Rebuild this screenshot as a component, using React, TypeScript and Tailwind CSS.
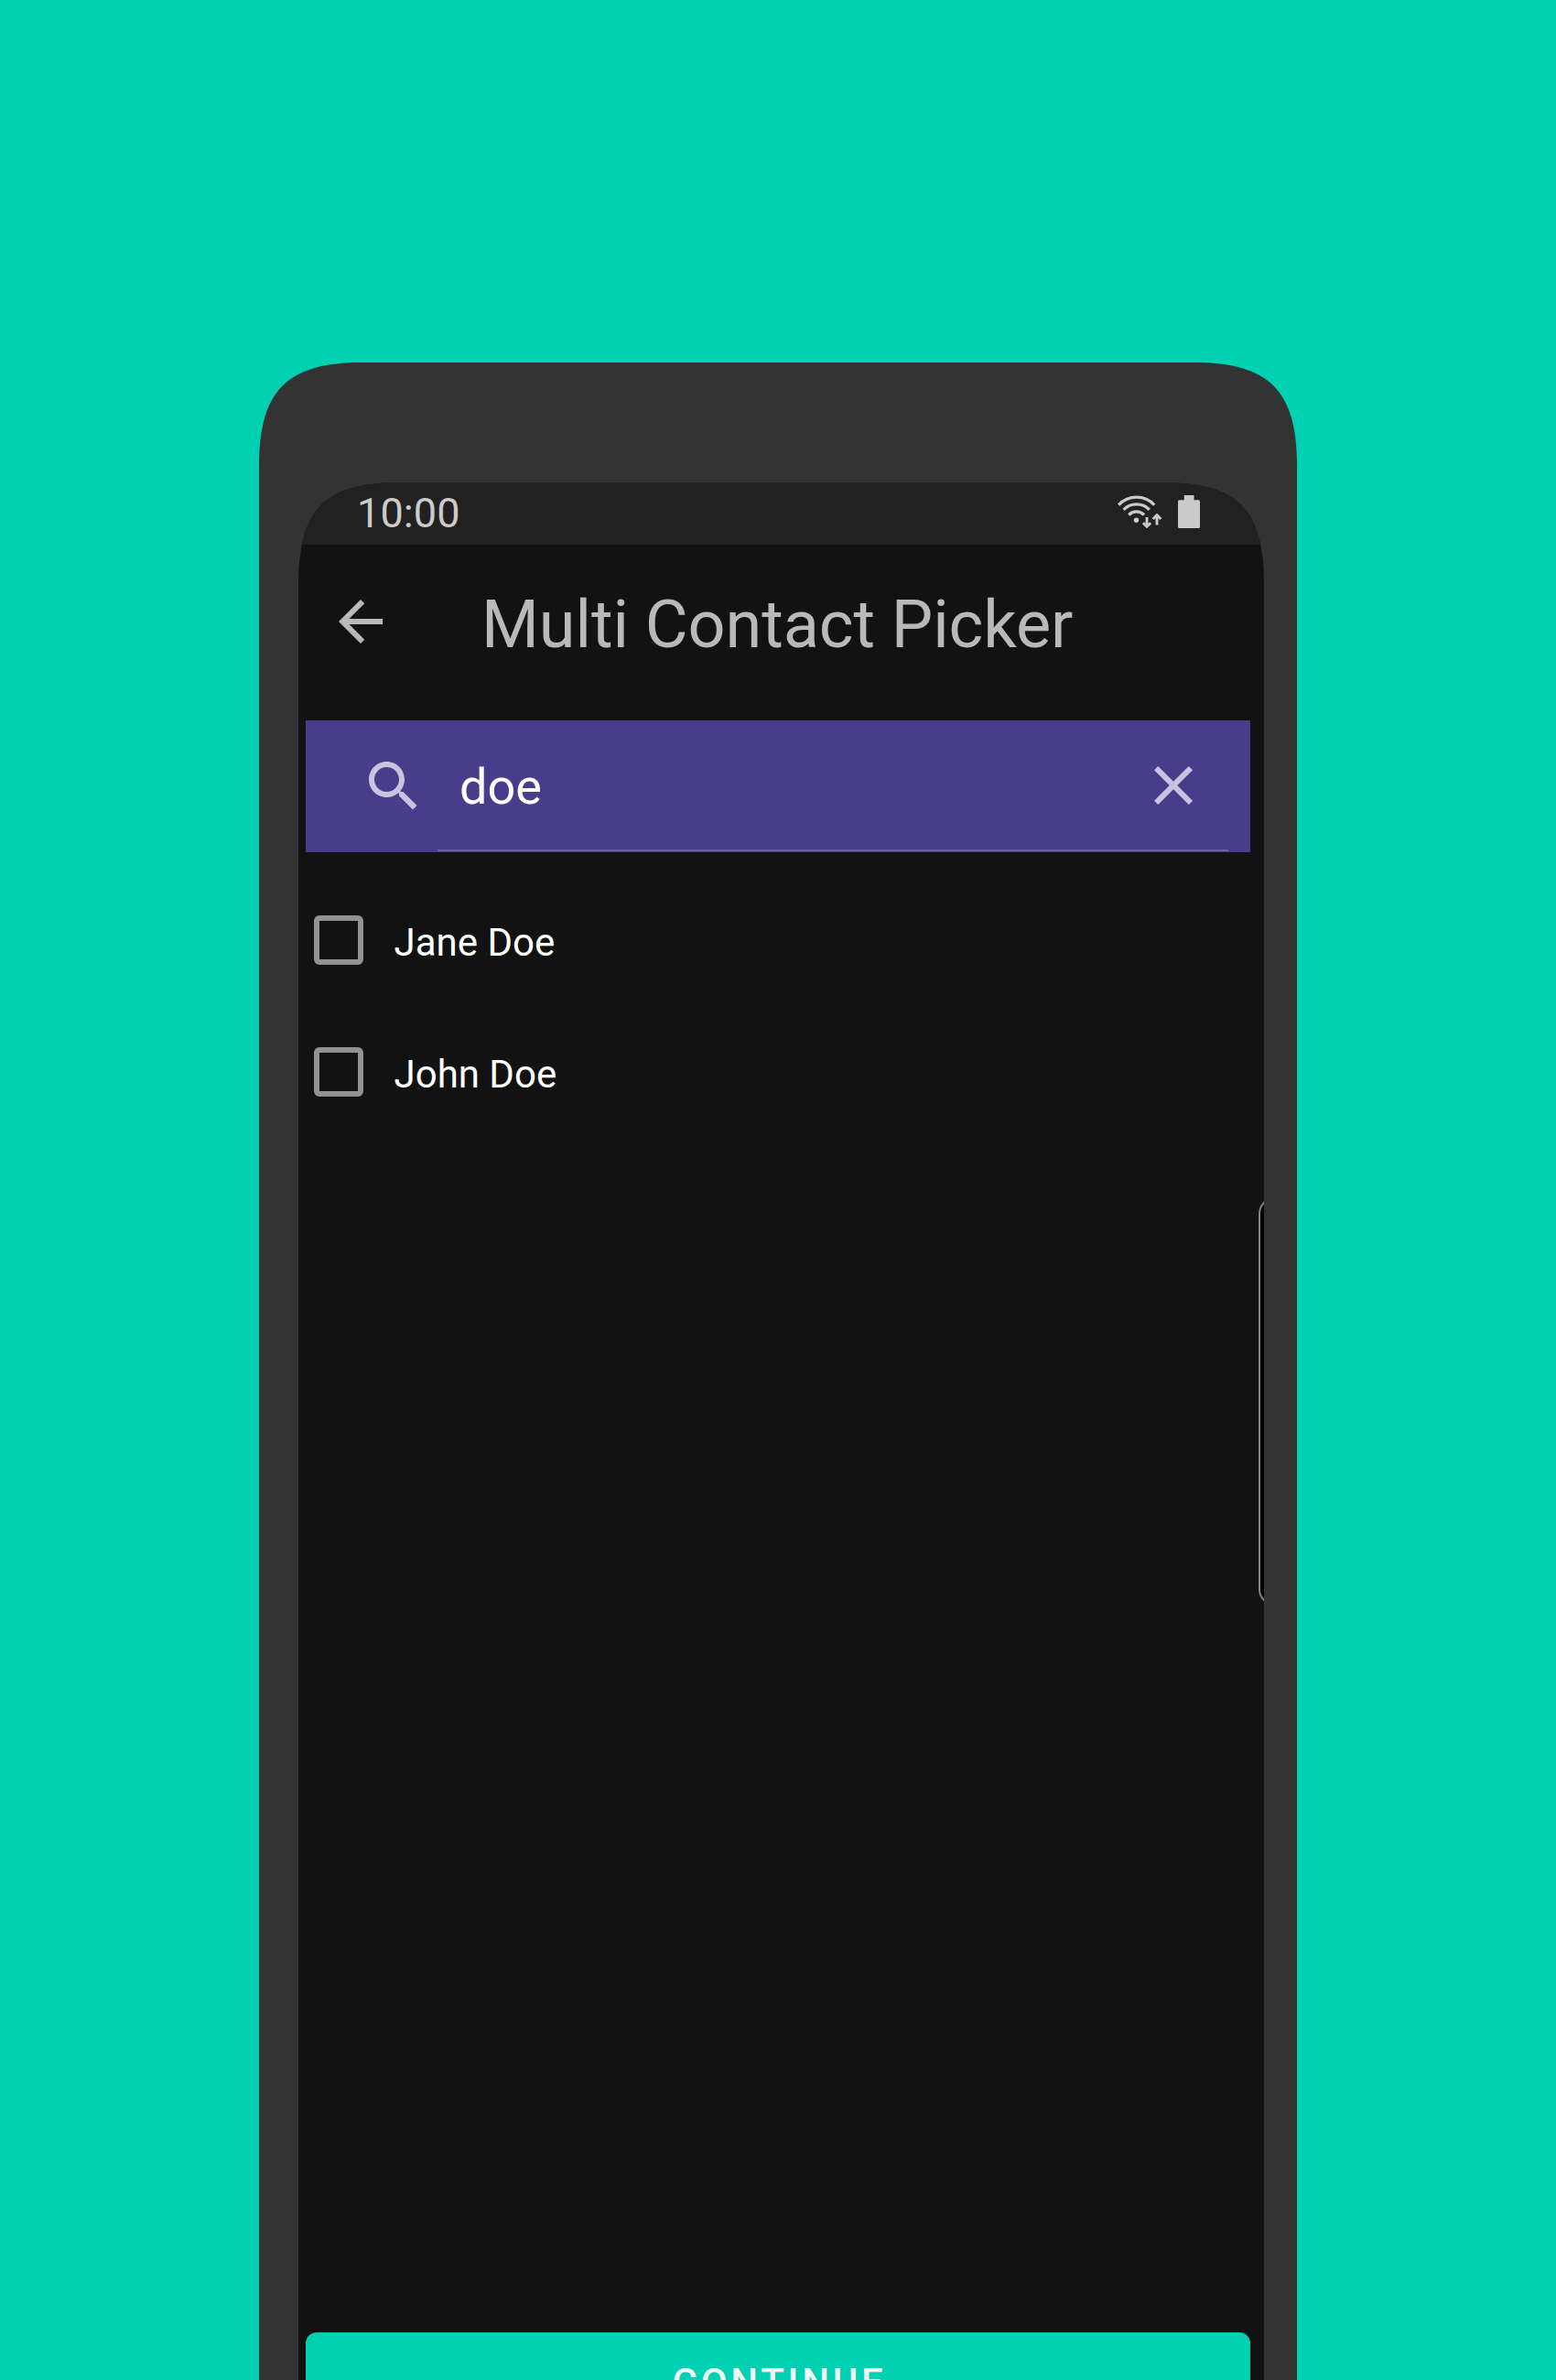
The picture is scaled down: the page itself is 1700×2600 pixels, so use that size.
const contacts = ["Jane Doe", "John Doe"];

function StatusBar() {
  return (
    <div className="flex h-[68px] items-center justify-between bg-[#212121] pl-[64px] pr-[70px] text-[#cbcbcb]">
      <span className="text-[45px] leading-[68px] tracking-[0.100px]">10:00</span>
      <div className="mb-[4px] flex h-[36px] items-start gap-[17px]">
        <svg className="h-[38px] w-[50px]" viewBox="0 0 50 38" fill="none" stroke="currentColor">
          <path d="M2.200 10.600C13 -0.600 30.500 -0.600 41.200 10.600" strokeWidth="3.200" />
          <path d="M7.600 15.800C15.500 8 28 8 35.800 15.800" strokeWidth="3.200" />
          <path d="M13.200 21.500C18 16.700 25 16.700 30 21.500" strokeWidth="3.200" />
          <circle cx="21.500" cy="27.200" r="2.700" fill="currentColor" stroke="none" />
          <path d="M33 24V34M28.800 30.200L33 34.200L37.200 30.200" strokeWidth="2.900" />
          <path d="M44 32.500V22M39.600 26L44 21.800L48.400 26" strokeWidth="2.900" />
        </svg>
        <svg className="h-[37px] w-[24px]" viewBox="0 0 24 37" fill="currentColor">
          <path d="M6.700 0H17.500V5.300H22.500A1.500 1.500 0 0 1 24 6.800V34.500A1.500 1.500 0 0 1 22.500 36H1.500A1.500 1.500 0 0 1 0 34.500V6.800A1.500 1.500 0 0 1 1.500 5.300H6.700Z" />
        </svg>
      </div>
    </div>
  );
}

function Header() {
  return (
    <header className="flex h-[192px] items-start pl-[32px] pt-[48px] text-[#b9b9b9]">
      <svg className="h-[72px] w-[72px]" viewBox="0 0 24 24" fill="currentColor">
        <path d="M20 11H7.830l5.590-5.590L12 4l-8 8 8 8 1.410-1.410L7.830 13H20v-2z" />
      </svg>
      <h1 className="ml-[96px] pt-[4px] text-[72px] leading-[72px] tracking-[-0.050px] whitespace-nowrap">
        Multi Contact Picker
      </h1>
    </header>
  );
}

function SearchBar() {
  return (
    <div className="ml-[8px] flex h-[144px] w-[1032px] bg-[#483d8b]">
      <div className="flex w-[144px] items-center pl-[60px] text-[#c9c4de]">
        <svg className="h-[72px] w-[72px]" viewBox="0 0 24 24" fill="currentColor">
          <path d="M15.500 14h-.79l-.28-.27C15.410 12.590 16 11.110 16 9.500 16 5.910 13.090 3 9.500 3S3 5.910 3 9.500 5.910 16 9.500 16c1.610 0 3.090-.59 4.230-1.570l.27.28v.79l5 4.990L20.490 19l-4.990-5zm-6 0C7.010 14 5 11.990 5 9.500S7.010 5 9.500 5 14 7.010 14 9.500 11.990 14 9.500 14z" />
        </svg>
      </div>
      <div className="mb-px flex w-[864px] items-center justify-between border-b-2 border-[#695ea0] pl-[24px] pr-[24px]">
        <span className="pt-[4px] text-[54px] leading-[138px] text-white">doe</span>
        <svg className="h-[72px] w-[72px] text-[#c9c4de]" viewBox="0 0 24 24" fill="currentColor">
          <path d="M19 6.410L17.590 5 12 10.590 6.410 5 5 6.410 10.590 12 5 17.590 6.410 19 12 13.410 17.590 19 19 17.590 13.410 12z" />
        </svg>
      </div>
    </div>
  );
}

export default function App() {
  return (
    <div className="flex h-[2600px] w-[1700px] items-start justify-center overflow-hidden bg-[#00d1b2] pt-[396px] font-['Roboto',sans-serif]">
      <div className="h-[2204px] w-[1134px] bg-[#333333] pl-[43px] pt-[131px] [clip-path:path('M0_113C0_30.5_30.5_0_113_0H1021C1103.5_0_1134_30.5_1134_113V2204H0Z')]">
        <div className="relative flex h-[2073px] w-[1055px] flex-col overflow-hidden bg-[#121212] [clip-path:path('M0_113C0_28.5_28.5_0_113_0H942C1026.5_0_1055_28.5_1055_113V2073H0Z')]">
          <StatusBar />
          <Header />
          <SearchBar />
          <ul className="mt-[24px] grow">
            {contacts.map((name) => (
              <li key={name} className="flex h-[144px] items-center pl-[17px]">
                <span className="h-[54px] w-[54px] rounded-[6px] border-[6px] border-[#929292]" />
                <span className="ml-[33.500px] pt-[5px] text-[42px] leading-[50px] text-white">{name}</span>
              </li>
            ))}
          </ul>
          <button className="ml-[8px] h-[52px] w-[1032px] shrink-0 rounded-t-[12px] bg-[#00d1b2] pt-[30px] pl-[3px] text-[42px] leading-[50px] font-medium tracking-[3.750px] text-[#f3f3f3]">
            CONTINUE
          </button>
          <div className="absolute top-[781px] left-[1049px] h-[446px] w-[40px] rounded-[18px] border-2 border-[#858585] bg-black" />
        </div>
      </div>
    </div>
  );
}
